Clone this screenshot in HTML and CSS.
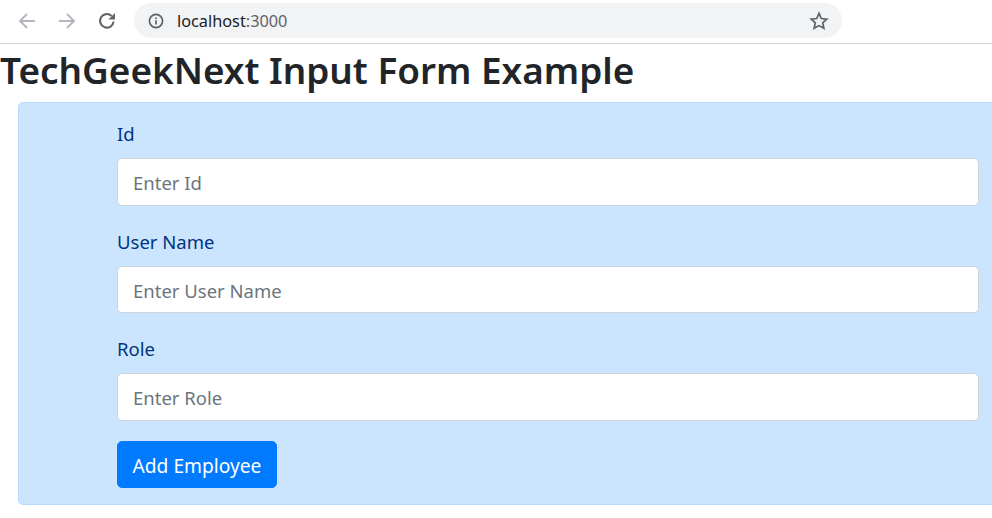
FILE: index.html
```html
<!DOCTYPE html>
<html lang="en">
<head>
<meta charset="utf-8">
<title>TechGeekNext Input Form Example</title>
<link rel="stylesheet" href="styles.css">
</head>
<body>
<header class="toolbar">
  <div class="nav">
    <svg class="icon nav-back" viewBox="0 0 18 18"><path d="M17 9H2M9 2 2 9l7 7"/></svg>
    <svg class="icon nav-forward" viewBox="0 0 18 18"><path d="M1 9h15M9 2l7 7-7 7"/></svg>
    <svg class="icon nav-reload" viewBox="0 0 18 18"><path d="M15.6 9.5A6.8 6.8 0 1 1 13.6 4"/><path class="fill" d="M17 1v6.6h-6.6z"/></svg>
  </div>
  <div class="omnibox">
    <svg class="info" viewBox="0 0 16 16"><circle cx="8" cy="8" r="6.6"/><path d="M8 7.2v4.2M8 4.4v1.6"/></svg>
    <span class="url"><span class="host">localhost</span><span class="port">:3000</span></span>
    <svg class="star" viewBox="0 0 20 20"><path d="M10 2.4l2.3 5.1 5.5.6-4.1 3.7 1.2 5.5L10 14.6l-4.9 2.7 1.2-5.5-4.1-3.7 5.5-.6z"/></svg>
  </div>
</header>
<main class="page">
  <h1 class="title">TechGeekNext Input Form Example</h1>
  <div class="alert">
    <form class="form">
      <div class="group">
        <label class="label" for="id">Id</label>
        <input class="control" id="id" type="text" placeholder="Enter Id">
      </div>
      <div class="group">
        <label class="label" for="name">User Name</label>
        <input class="control" id="name" type="text" placeholder="Enter User Name">
      </div>
      <div class="group">
        <label class="label" for="role">Role</label>
        <input class="control" id="role" type="text" placeholder="Enter Role">
      </div>
      <button class="btn" type="button">Add Employee</button>
    </form>
  </div>
</main>
</body>
</html>
```
FILE: styles.css
```css
* { box-sizing: border-box; }
html, body { margin: 0; height: 100%; overflow: hidden; background: #fff; }
body { font-family: "Noto Sans", "Open Sans", sans-serif; color: #212529; }

.toolbar {
  height: 44px;
  display: flex;
  align-items: flex-start;
  padding-top: 3px;
  border-bottom: 1px solid #d2d3d6;
}
.nav { display: flex; align-items: center; width: 134px; height: 35px; padding-left: 18px; }
.icon { width: 18px; height: 18px; fill: none; stroke-width: 1.9; }
.nav-back, .nav-forward { stroke: #b3b6bb; }
.nav-forward { margin-left: 22px; }
.nav-reload { margin-left: 22px; stroke: #5f6368; stroke-width: 2.1; }
.nav-reload .fill { fill: #5f6368; stroke: none; }

.omnibox {
  width: 708px;
  height: 35px;
  border-radius: 18px;
  background: #f1f3f4;
  display: flex;
  align-items: center;
  padding: 0 13px 0 14px;
}
.info { width: 16px; height: 16px; fill: none; stroke: #5f6368; stroke-width: 1.7; flex: none; }
.url { margin-left: 13px; font-size: 16.3px; flex: 1; white-space: nowrap; }
.host { color: #202124; }
.port { color: #5f6368; }
.star { width: 20px; height: 20px; fill: none; stroke: #5f6368; stroke-width: 1.7; flex: none; }

.title {
  margin: 0 0 6px;
  font-size: 36.9px;
  line-height: 52px;
  font-weight: 600;
  white-space: nowrap;
}
.alert {
  width: 1000px;
  margin-left: 18px;
  padding: 15px 0 16px 98px;
  background: #cce5ff;
  border: 1px solid #b8daff;
  border-radius: 5px;
  color: #003380;
}
.form { width: 862px; }
.group { margin-bottom: 20px; }
.label {
  display: block;
  margin-bottom: 9px;
  padding-top: 1px;
  font-size: 18.5px;
  line-height: 30px;
}
.control {
  display: block;
  width: 100%;
  height: 47.5px;
  padding: 2px 15px 0;
  font: inherit;
  font-size: 18.5px;
  color: #495057;
  background: #fff;
  border: 1px solid #ced4da;
  border-radius: 5px;
  outline: none;
}
.control::placeholder { color: #6c757d; opacity: 1; }
.btn {
  display: block;
  height: 47.5px;
  width: 160px;
  padding: 2px 0 0;
  font: inherit;
  font-size: 19.2px;
  color: #fff;
  background: #007bff;
  border: 1px solid #007bff;
  border-radius: 5px;
}
```
